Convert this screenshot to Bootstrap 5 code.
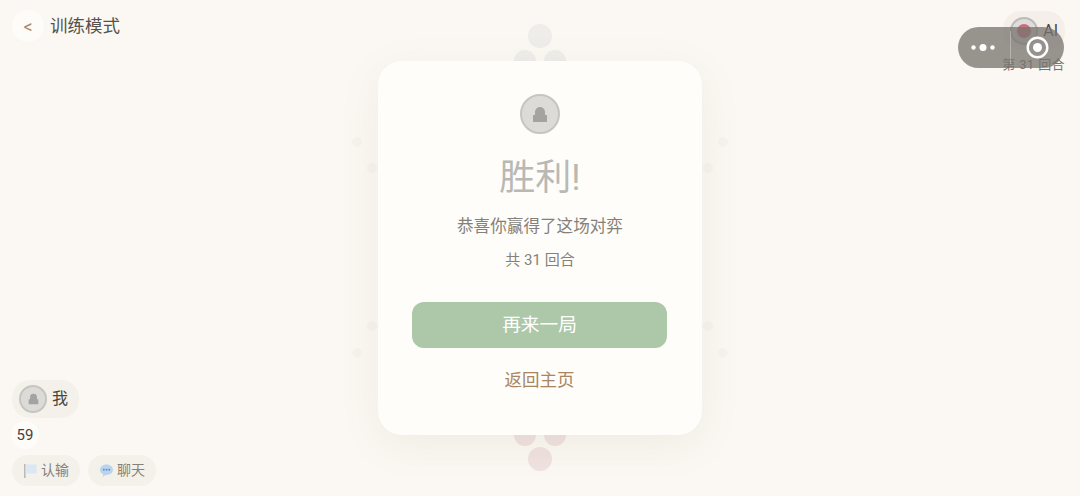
<!DOCTYPE html>
<html lang="zh-CN">
<head>
    <meta charset="UTF-8">
    <title>训练模式</title>
    <meta name="viewport" content="width=device-width, initial-scale=1">
    <link href="https://cdn.jsdelivr.net/npm/bootstrap@5.3.2/dist/css/bootstrap.min.css" rel="stylesheet">
    <style>
        html, body { height: 100%; }
        body {
            width: 1080px; height: 496px; overflow: hidden; position: relative;
            background: #fbf8f3; color: #4a4640;
            font-family: Roboto, "Noto Sans CJK SC", sans-serif;
        }
        .game-screen { height: 496px; padding: 10px 12px 10px; }
        .back-btn { width: 32px; height: 32px; background: #fefcf8; color: #a98a6e; font-size: 18px; }
        .mode-title { font-size: 17.5px; color: #55514b; margin-left: 6px; line-height: 32px; }
        .player-chip { background: #f4f1eb; border-radius: 18px; padding: 4px 11px 4px 7px; height: 38px; font-size: 16px; gap: 5px; }
        .opponent-col { margin-top: 1px; margin-right: 3px; }
        .opponent-col .player-chip { background: #f5efea; padding: 4px 7px; height: 39px; }
        .round-note { font-size: 13px; color: #77736c; letter-spacing: .4px; margin-top: 5px; line-height: 20px; }
        .avatar-ring {
            width: 28px; height: 28px; background: #dcdbd7; border: 2px solid #c6c5c0;
        }
        .avatar-ring.large { width: 40px; height: 40px; }
        .avatar-ring.red { background: #ddd; border-color: #bbb; }
        .red-dot { width: 14px; height: 14px; background: #c9707c; }
        .score-text { width: 28px; height: 28px; margin: 3px 0 6px -1px; background: #fefcf8; font-size: 15px; color: #45423d; }
        .tool-chip { height: 31px; background: #f4f1eb; border-radius: 16px; font-size: 14px; color: #85817a; padding: 0 11px; gap: 3px; }
        .tools { gap: 8px; }
        .piece { position: absolute; border-radius: 50%; }
        .piece-grey { background: #efedea; }
        .piece-pink { background: #f0e2e0; }
        .piece-dot { width: 10px; height: 10px; background: #f6f3ee; }
        .result-panel {
            position: absolute; left: 378px; top: 61px; width: 324px; height: 374px;
            background: #fffdf9; border-radius: 24px; padding: 33px 34px 0 34px;
            box-shadow: 0 10px 40px rgba(120, 100, 80, .09);
        }
        .result-title { font-size: 36px; line-height: 44px; color: #b8b9b5; margin: 22px 0 0; font-weight: 400; }
        .result-sub { font-size: 16.6px; line-height: 22px; color: #85817a; margin-top: 16px; }
        .result-round { font-size: 15px; line-height: 20px; color: #85817a; margin-top: 12px; }
        .again-btn {
            display: block; width: 255px; height: 46px; margin-top: 32px; padding: 0;
            background: #adc7a9; border: 0; border-radius: 12px; color: #fff; font-size: 18.7px;
        }
        .home-btn { display: block; width: 255px; margin-top: 20px; padding: 0; border: 0; background: none; color: #a98562; font-size: 17.5px; line-height: 24px; }
        .wx-capsule {
            position: absolute; left: 958px; top: 27px; width: 106px; height: 41px;
            background: rgba(120, 116, 110, .76); border-radius: 21px;
        }
        .wx-capsule .split { position: absolute; left: 52px; top: 4px; bottom: 4px; width: 1px; background: rgba(255,255,255,.3); }
    </style>
</head>
<body>
    <!-- board pieces behind the panel -->
    <div class="piece piece-grey" style="left:528px;top:24px;width:24px;height:24px"></div>
    <div class="piece piece-grey" style="left:514px;top:50px;width:22px;height:22px"></div>
    <div class="piece piece-grey" style="left:544px;top:50px;width:22px;height:22px"></div>
    <div class="piece piece-pink" style="left:514px;top:424px;width:22px;height:22px"></div>
    <div class="piece piece-pink" style="left:544px;top:424px;width:22px;height:22px"></div>
    <div class="piece piece-pink" style="left:528px;top:447px;width:24px;height:24px"></div>
    <div class="piece piece-dot" style="left:352px;top:137px"></div>
    <div class="piece piece-dot" style="left:367px;top:163px"></div>
    <div class="piece piece-dot" style="left:718px;top:137px"></div>
    <div class="piece piece-dot" style="left:703px;top:163px"></div>
    <div class="piece piece-dot" style="left:352px;top:348px"></div>
    <div class="piece piece-dot" style="left:367px;top:321px"></div>
    <div class="piece piece-dot" style="left:718px;top:348px"></div>
    <div class="piece piece-dot" style="left:703px;top:321px"></div>

    <div class="game-screen d-flex flex-column justify-content-between position-relative">
        <div class="d-flex justify-content-between align-items-start">
            <div class="d-flex align-items-center">
                <div class="back-btn rounded-circle d-flex align-items-center justify-content-center">&lt;</div>
                <div class="mode-title">训练模式</div>
            </div>
            <div class="opponent-col d-flex flex-column align-items-end">
                <div class="player-chip d-flex align-items-center">
                    <div class="avatar-ring red rounded-circle d-flex align-items-center justify-content-center">
                        <div class="red-dot rounded-circle"></div>
                    </div>
                    <span>AI</span>
                </div>
                <div class="round-note">第 31 回合</div>
            </div>
        </div>

        <div>
            <div class="d-inline-flex player-chip align-items-center">
                <div class="avatar-ring rounded-circle d-flex align-items-center justify-content-center">
                    <svg width="11" height="12" viewBox="0 0 16 17"><path d="M3 9V6a5 5 0 0 1 10 0v3h2v7H1V9z" fill="#a3a3a1"/></svg>
                </div>
                <span>我</span>
            </div>
            <div class="score-text rounded-circle d-flex align-items-center justify-content-center">59</div>
            <div class="d-flex tools">
                <div class="tool-chip d-flex align-items-center">
                    <svg width="15" height="16" viewBox="0 0 15 16"><rect x="1" y="1" width="1.6" height="14" fill="#bdb9b2"/><rect x="2.6" y="1.5" width="11" height="9" fill="#dbe7f2"/></svg>
                    <span>认输</span>
                </div>
                <div class="tool-chip d-flex align-items-center">
                    <svg width="15" height="15" viewBox="0 0 15 15"><path d="M7.5 1.5c3.6 0 6.5 2.3 6.5 5.2s-2.9 5.2-6.5 5.2l-1 .1-2.8 2 .5-2.7C2.3 10.400 1 8.700 1 6.700 1 3.800 3.900 1.500 7.500 1.500z" fill="#b9d4ef"/><circle cx="4.800" cy="6.700" r=".9" fill="#5f86b5"/><circle cx="7.500" cy="6.700" r=".9" fill="#5f86b5"/><circle cx="10.200" cy="6.700" r=".9" fill="#5f86b5"/></svg>
                    <span>聊天</span>
                </div>
            </div>
        </div>
    </div>

    <div class="result-panel text-center">
        <div class="avatar-ring large rounded-circle d-flex align-items-center justify-content-center mx-auto">
            <svg width="16" height="17" viewBox="0 0 16 17"><path d="M3 9V6a5 5 0 0 1 10 0v3h2v7H1V9z" fill="#a3a3a1"/></svg>
        </div>
        <h2 class="result-title">胜利!</h2>
        <div class="result-sub">恭喜你赢得了这场对弈</div>
        <div class="result-round">共 31 回合</div>
        <button type="button" class="btn again-btn">再来一局</button>
        <button type="button" class="btn home-btn">返回主页</button>
    </div>

    <div class="wx-capsule">
        <svg class="position-absolute" style="left:13px;top:15px" width="24" height="11" viewBox="0 0 24 11"><circle cx="2.500" cy="5.500" r="2.200" fill="#fff"/><circle cx="12" cy="5.500" r="3.500" fill="#fff"/><circle cx="21.500" cy="5.500" r="2.200" fill="#fff"/></svg>
        <div class="split"></div>
        <svg class="position-absolute" style="left:68px;top:9px" width="23" height="23" viewBox="0 0 23 23"><circle cx="11.500" cy="11.500" r="9.800" fill="none" stroke="#fff" stroke-width="2.400"/><circle cx="11.500" cy="11.500" r="4.500" fill="#fff"/></svg>
    </div>

    <script src="https://cdn.jsdelivr.net/npm/bootstrap@5.3.2/dist/js/bootstrap.bundle.min.js"></script>
</body>
</html>
